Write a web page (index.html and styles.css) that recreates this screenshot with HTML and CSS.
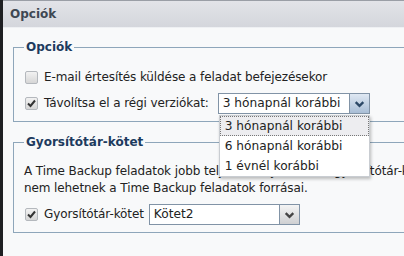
FILE: index.html
```
<!DOCTYPE html>
<html lang="hu">
<head>
<meta charset="utf-8">
<link rel="stylesheet" href="styles.css">
</head>
<body>
<div class="window">
  <div class="titlebar">Opciók</div>
  <div class="content">
    <fieldset class="group group-opts">
      <legend class="legend">Opciók</legend>
      <div class="row">
        <span class="cb"></span>
        <span class="label">E-mail értesítés küldése a feladat befejezésekor</span>
      </div>
      <div class="row">
        <span class="cb checked"><svg viewBox="0 0 13 13" width="13" height="13"><path d="M3 6.5 L5.5 9 L10 3.5" fill="none" stroke="#333" stroke-width="2"/></svg></span>
        <span class="label">Távolítsa el a régi verziókat:</span>
        <div class="select blue">
          <span class="select-text">3 hónapnál korábbi</span>
          <span class="select-btn"><svg viewBox="0 0 20 20" width="20" height="20"><path d="M6 8 L10 12 L14 8" fill="none" stroke="#2c4866" stroke-width="2.4"/></svg></span>
          <ul class="dropdown">
            <li class="opt active">3 hónapnál korábbi</li>
            <li class="opt">6 hónapnál korábbi</li>
            <li class="opt">1 évnél korábbi</li>
          </ul>
        </div>
      </div>
    </fieldset>
    <fieldset class="group group-cache">
      <legend class="legend">Gyorsítótár-kötet</legend>
      <p class="desc">A Time Backup feladatok jobb teljesítménye miatt a gyorsítótár-kötetek<br>nem lehetnek a Time Backup feladatok forrásai.</p>
      <div class="row">
        <span class="cb checked"><svg viewBox="0 0 13 13" width="13" height="13"><path d="M3 6.5 L5.5 9 L10 3.5" fill="none" stroke="#333" stroke-width="2"/></svg></span>
        <span class="label">Gyorsítótár-kötet</span>
        <div class="select gray">
          <span class="select-text">Kötet2</span>
          <span class="select-btn"><svg viewBox="0 0 20 20" width="20" height="20"><path d="M6 8 L10 12 L14 8" fill="none" stroke="#444" stroke-width="2.4"/></svg></span>
        </div>
      </div>
    </fieldset>
  </div>
</div>
</body>
</html>
```
FILE: styles.css
```
* { box-sizing: border-box; }
html, body { margin: 0; padding: 0; }
body {
  width: 404px;
  height: 256px;
  overflow: hidden;
  background: #f8f9fa;
  font-family: "DejaVu Sans", Verdana, sans-serif;
  font-size: 12px;
  color: #222;
}
.window {
  height: 256px;
  border-left: 3px solid #1e1f22;
  background: #f8f9fa;
  overflow: hidden;
}
.titlebar {
  height: 28px;
  border-top: 1px solid #9a9ea6;
  background: linear-gradient(#e2e3e8, #d4d6dc);
  border-bottom: 1px solid #eef0f3;
  padding-left: 7px;
  line-height: 27px;
  font-weight: bold;
  font-size: 12px;
  color: #3e4752;
}
.content {
  padding-left: 10px;
}
.group {
  margin: 0;
  width: 460px;
  border: 1px solid #8ea6ba;
  padding: 0 0 0 10px;
}
.group-opts { margin-top: 12px; height: 82px; }
.group-cache { margin-top: 13px; height: 98px; }
.legend {
  padding: 0 2px;
  margin-left: 0;
  font-weight: bold;
  font-size: 12px;
  color: #1d3b5e;
  line-height: 14px;
}
.row {
  display: flex;
  align-items: center;
  height: 26px;
  position: relative;
}
.group-opts .row:first-of-type { margin-top: 10px; }
.label {
  white-space: nowrap;
  letter-spacing: -0.1px;
}
.cb {
  width: 13px;
  height: 13px;
  border: 1px solid #b4b8bd;
  border-radius: 2px;
  background: linear-gradient(#f2f2f2, #d6d6d6);
  margin-left: 1px;
  margin-right: 6px;
  flex: none;
  display: flex;
}
.cb svg { margin: -1px; }
.select {
  position: relative;
  display: flex;
  height: 21px;
  border: 1px solid #8193a6;
  background: #fff;
  margin-left: 9px;
  width: 152px;
}
.group-cache .select { margin-left: 5px; width: 151px; }
.select-text {
  flex: 1;
  padding-left: 4px;
  font-size: 12.2px;
  line-height: 19px;
}
.select-btn {
  width: 20px;
  border-left: 1px solid #8193a6;
  display: flex;
}
.blue .select-btn { background: linear-gradient(#dfe8f2, #a9bed6); }
.gray .select-btn { background: linear-gradient(#f4f4f4, #cfd0d2); }
.dropdown {
  position: absolute;
  left: 0;
  top: 21px;
  width: 151px;
  margin: 0;
  padding: 0;
  list-style: none;
  background: #fff;
  border: 1px solid #c9cdd2;
  box-shadow: 1px 2px 3px rgba(0,0,0,0.25);
  z-index: 5;
}
.opt {
  height: 20px;
  line-height: 18px;
  padding-left: 4px;
  font-size: 12.2px;
  border: 1px dotted transparent;
}
.opt.active {
  background: #ededf0;
  border: 1px dotted #777;
}
.desc {
  margin: 14px 0 0 0;
  line-height: 17px;
  white-space: nowrap;
  letter-spacing: -0.1px;
}
.group-cache .row { margin-top: 4px; }
```
